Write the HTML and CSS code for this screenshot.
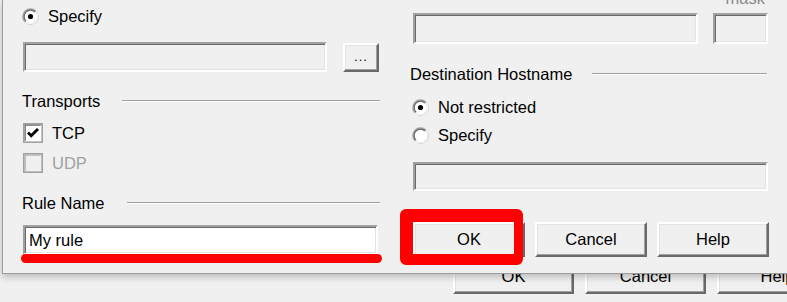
FILE: index.html
```html
<!DOCTYPE html>
<html lang="en">
<head>
    <meta charset="UTF-8">
    <meta name="viewport" content="width=device-width, initial-scale=1.0">
    <title>Rule</title>
    <link rel="stylesheet" href="styles.css">
</head>
<body>
    <div class="screen">
        <div class="dialog">
            <div class="col col-left">
                <label class="choice choice-top">
                    <svg class="radio" viewBox="0 0 17 17" width="17" height="17">
                        <circle cx="8.5" cy="8.5" r="7.5" fill="#fff" stroke="#a0a0a0" stroke-width="1.6"/>
                        <path d="M3.2 13.8 A7.5 7.5 0 0 0 13.8 3.2" fill="none" stroke="#f4f4f4" stroke-width="1.6"/>
                        <path d="M4 13 A6.2 6.2 0 0 1 13 4" fill="none" stroke="#6a6a6a" stroke-width="1.2"/>
                        <circle cx="8.5" cy="8.5" r="2.6" fill="#000"/>
                    </svg>
                    <span>Specify</span>
                </label>
                <div class="field-row">
                    <div class="field field-path"></div>
                    <button class="btn btn-browse">...</button>
                </div>
                <div class="group-head group-transports">
                    <span>Transports</span>
                    <i class="etch"></i>
                </div>
                <label class="check">
                    <svg class="box" viewBox="0 0 20 20" width="20" height="20">
                        <rect x="0.8" y="0.8" width="18.4" height="18.4" fill="#fff" stroke="#a0a0a0" stroke-width="1.6"/>
                        <path d="M2.2 17.8 V2.2 H17.8" fill="none" stroke="#6a6a6a" stroke-width="1.2"/>
                        <path d="M5 9.6 L8.2 12.8 L15 6" fill="none" stroke="#000" stroke-width="2.8"/>
                    </svg>
                    <span>TCP</span>
                </label>
                <label class="check check-off">
                    <svg class="box" viewBox="0 0 20 20" width="20" height="20">
                        <rect x="0.8" y="0.8" width="18.4" height="18.4" fill="#f0f0f0" stroke="#a0a0a0" stroke-width="1.6"/>
                        <path d="M2.2 17.8 V2.2 H17.8" fill="none" stroke="#b4b4b4" stroke-width="1.2"/>
                    </svg>
                    <span>UDP</span>
                </label>
                <div class="group-head group-name">
                    <span>Rule Name</span>
                    <i class="etch"></i>
                </div>
                <div class="field field-name">
                    My rule
                    <span class="mark-line"></span>
                </div>
            </div>

            <div class="col col-right">
                <div class="mask-label">mask</div>
                <div class="addr-row">
                    <div class="field field-addr"></div>
                    <div class="field field-mask"></div>
                </div>
                <div class="group-head group-dest">
                    <span>Destination Hostname</span>
                    <i class="etch"></i>
                </div>
                <label class="choice choice-right">
                    <svg class="radio" viewBox="0 0 17 17" width="17" height="17">
                        <circle cx="8.5" cy="8.5" r="7.5" fill="#fff" stroke="#a0a0a0" stroke-width="1.6"/>
                        <path d="M3.2 13.8 A7.5 7.5 0 0 0 13.8 3.2" fill="none" stroke="#f4f4f4" stroke-width="1.6"/>
                        <path d="M4 13 A6.2 6.2 0 0 1 13 4" fill="none" stroke="#6a6a6a" stroke-width="1.2"/>
                        <circle cx="8.5" cy="8.5" r="2.6" fill="#000"/>
                    </svg>
                    <span>Not restricted</span>
                </label>
                <label class="choice choice-right choice-next">
                    <svg class="radio" viewBox="0 0 17 17" width="17" height="17">
                        <circle cx="8.5" cy="8.5" r="7.5" fill="#fff" stroke="#a0a0a0" stroke-width="1.6"/>
                        <path d="M3.2 13.8 A7.5 7.5 0 0 0 13.8 3.2" fill="none" stroke="#f4f4f4" stroke-width="1.6"/>
                        <path d="M4 13 A6.2 6.2 0 0 1 13 4" fill="none" stroke="#6a6a6a" stroke-width="1.2"/>
                    </svg>
                    <span>Specify</span>
                </label>
                <div class="field field-host"></div>
                <div class="actions">
                    <button class="btn btn-action btn-ok">OK<span class="mark-box"></span></button>
                    <button class="btn btn-action">Cancel</button>
                    <button class="btn btn-action">Help</button>
                </div>
            </div>
        </div>

        <div class="behind">
            <button class="btn btn-back">OK</button>
            <button class="btn btn-back">Cancel</button>
            <button class="btn btn-back">Help</button>
        </div>
    </div>
</body>
</html>
```

FILE: styles.css
```css
:root {
    --face: #f0f0f0;
    --shade: #a0a0a0;
    --dark: #696969;
    --light: #ffffff;
    --mark: #ff0000;
}

* {
    margin: 0;
    padding: 0;
    box-sizing: border-box;
}

body {
    width: 787px;
    height: 302px;
    overflow: hidden;
    background: var(--face);
    font-family: 'Liberation Sans', Arial, sans-serif;
    font-size: 16.5px;
    color: #000;
}

.screen {
    padding-left: 2px;
}

.dialog {
    position: relative;
    z-index: 1;
    width: 830px;
    height: 274px;
    padding-left: 19px;
    background: var(--face);
    border-left: 1px solid #9c9c9c;
    border-bottom: 1px solid #9c9c9c;
    box-shadow: 0 3px 7px rgba(0, 0, 0, 0.22);
    display: grid;
    grid-template-columns: 358px 359px;
    column-gap: 30px;
    align-items: start;
}

.col {
    display: flex;
    flex-direction: column;
}

/* sunken edit box */
.field {
    background: var(--face);
    border: 2px solid;
    border-color: #a0a0a0 var(--light) var(--light) #a0a0a0;
    box-shadow: inset 1px 1px 0 var(--dark), inset -1px -1px 0 #e3e3e3;
}

/* raised push button */
.btn {
    font: inherit;
    color: #000;
    background: var(--face);
    border: 2px solid;
    border-color: var(--light) var(--dark) var(--dark) var(--light);
    box-shadow: inset -1px -1px 0 var(--shade), inset 1px 1px 0 #e3e3e3;
    display: flex;
    align-items: center;
    justify-content: center;
}

.choice,
.check {
    display: flex;
    align-items: center;
    gap: 9px;
}

.choice {
    height: 24px;
}

.choice-top {
    margin-top: 4px;
}

.check {
    height: 20px;
    margin-left: 1px;
}

.check + .check {
    margin-top: 10px;
}

.check-off {
    color: var(--shade);
}

.radio,
.box {
    flex: none;
    display: block;
}

.field-row {
    display: flex;
    margin-top: 14px;
    padding: 0 1px;
    height: 30px;
}

.field-path {
    flex: 1;
}

.btn-browse {
    width: 36px;
    height: 29px;
    margin-top: 1px;
    margin-left: 16px;
    font-size: 13px;
    align-items: flex-end;
    padding-bottom: 6px;
    letter-spacing: 1px;
}

.group-head {
    display: flex;
    align-items: center;
    gap: 22px;
    height: 20px;
}

.etch {
    flex: 1;
    height: 2px;
    border-top: 1px solid var(--shade);
    border-bottom: 1px solid var(--light);
}

.group-transports {
    margin-top: 19px;
    margin-bottom: 12px;
}

.group-name {
    margin-top: 20px;
}

.group-dest {
    margin-top: 20px;
    margin-right: 2px;
    gap: 20px;
}

.field-name {
    position: relative;
    margin: 12px 2px 0 1px;
    height: 30px;
    background: #fff;
    padding-left: 4px;
    display: flex;
    align-items: center;
}

.mark-line {
    position: absolute;
    left: -4px;
    right: -6px;
    top: 27px;
    height: 9px;
    border-radius: 5px;
    background: var(--mark);
}

.mask-label {
    margin-top: -10px;
    height: 16px;
    line-height: 16px;
    text-align: right;
    padding-right: 4px;
    color: #8a8a8a;
}

.addr-row {
    display: flex;
    gap: 15px;
    margin-top: 7px;
    margin-left: 3px;
    margin-right: 1px;
    height: 31px;
}

.field-addr {
    flex: 1;
}

.field-mask {
    width: 55px;
}

.choice-right {
    margin-left: 2px;
    margin-top: 11px;
}

.choice-next {
    margin-top: 4px;
}

.field-host {
    margin: 15px 1px 0 3px;
    height: 29px;
}

.actions {
    display: flex;
    gap: 10px;
    margin: 31px 0 0 3px;
}

.btn-action {
    position: relative;
    width: 112px;
    height: 35px;
}

.mark-box {
    position: absolute;
    left: -15px;
    top: -15px;
    right: 0;
    bottom: -10px;
    border: solid var(--mark);
    border-width: 13px 9px 11px 13px;
    border-radius: 6px;
}

.behind {
    display: flex;
    gap: 11px;
    margin-top: -16px;
    padding-left: 451px;
}

.btn-back {
    flex: none;
    width: 121px;
    height: 36px;
}
```
